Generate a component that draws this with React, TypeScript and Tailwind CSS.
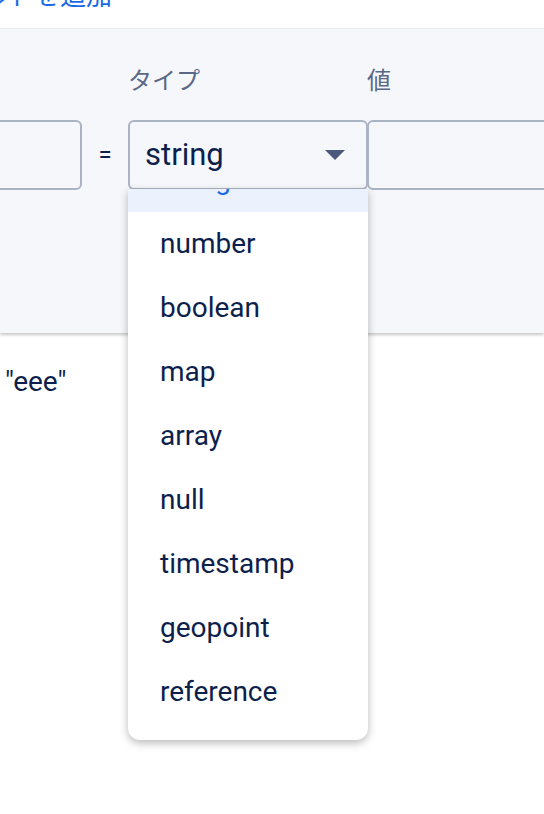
import React from 'react';

const types = ['string', 'number', 'boolean', 'map', 'array', 'null', 'timestamp', 'geopoint', 'reference'];

export default function App() {
  return (
    <div
      className="relative h-[814px] w-full overflow-hidden bg-white text-[#0d1f4c]"
      style={{ fontFamily: 'Roboto, "Noto Sans CJK JP", sans-serif' }}
    >
      {/* Add-field link, scrolled mostly out of view */}
      <div className="h-[28px] overflow-hidden">
        <div className="-mt-[17px] flex w-[112px] justify-end whitespace-nowrap text-[26px] leading-[26px] text-[#1a6ae6]">
          フィールドを追加
        </div>
      </div>

      {/* Editor panel */}
      <div className="h-[305px] border-t border-[#ebedf2] bg-[#f6f7fb] shadow-[0_2px_3px_rgba(0,0,0,0.22)]">
        <div className="flex pt-[38px] text-[24px] leading-[28px] text-[#5a6887]">
          <span className="ml-[128px] w-[239px]">タイプ</span>
          <span>値</span>
        </div>
        <div className="mt-[25px] flex items-center">
          <div className="-ml-[118px] h-[70px] w-[200px] shrink-0 rounded-[6px] border-2 border-[#aab3c4]" />
          <span className="w-[46px] shrink-0 text-center text-[24px]">=</span>
          <div className="flex h-[70px] w-[240px] shrink-0 items-center justify-between rounded-[6px] border-2 border-[#aab3c4] pl-[15px] pr-[21px]">
            <span className="text-[31px]">string</span>
            <svg width="20" height="10" viewBox="0 0 20 10">
              <path d="M0 0 L20 0 L10 10 Z" fill="#4a5a7d" />
            </svg>
          </div>
          <div className="-ml-[1px] h-[70px] w-[300px] shrink-0 rounded-[6px] border-2 border-[#aab3c4]" />
        </div>
      </div>

      <div className="mt-[33px] pl-[5px] text-[28px] leading-[32px]">"eee"</div>

      {/* Type dropdown */}
      <div className="absolute left-[128px] top-[189px] h-[551px] w-[240px] overflow-hidden rounded-b-[12px] bg-white shadow-[0_3px_8px_rgba(0,0,0,0.28)]">
        <div className="-mt-[41px]">
          {types.map((t, i) => (
            <div
              key={t}
              className={`flex h-[64px] items-center pl-[32px] text-[28px] ${
                i === 0 ? 'bg-[#ebf2fd] text-[#1a6ae6]' : ''
              }`}
            >
              {t}
            </div>
          ))}
        </div>
      </div>
    </div>
  );
}
